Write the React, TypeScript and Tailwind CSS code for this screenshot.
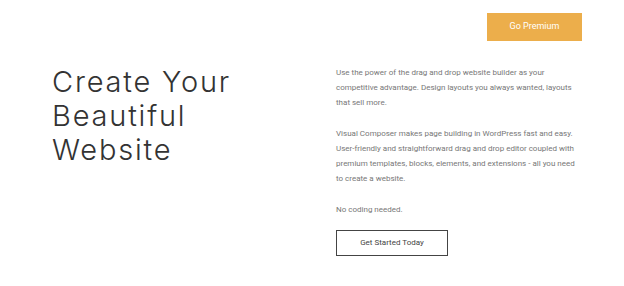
export default function App() {
  return (
    <div className="h-[286px] w-[624px] bg-white font-['Roboto',sans-serif]">
      <header className="flex justify-end pr-[42px] pt-[13px]">
        <button
          type="button"
          className="h-[28px] w-[95px] bg-[#ecae4b] text-[9px] text-white"
        >
          Go Premium
        </button>
      </header>

      <main className="mt-[24px] flex">
        <div className="w-[336px] pl-[52px]">
          <h1 className="font-['Inter',sans-serif] text-[29px] font-light leading-[34px] tracking-[1.8px] text-[#333]">
            Create Your
            <br />
            Beautiful
            <br />
            Website
          </h1>
        </div>

        <section className="w-[240px] text-[8px] leading-[15.2px] text-[#777]">
          <p>
            Use the power of the drag and drop website builder as your
            competitive advantage. Design layouts you always wanted, layouts
            that sell more.
          </p>
          <p className="mt-[15.2px]">
            Visual Composer makes page building in WordPress fast and easy.
            User-friendly and straightforward drag and drop editor coupled with
            premium templates, blocks, elements, and extensions - all you need
            to create a website.
          </p>
          <p className="mt-[15.2px]">No coding needed.</p>
          <button
            type="button"
            className="mt-[13px] h-[26px] w-[112px] border-[1.5px] border-[#444] text-[8px] text-[#444]"
          >
            Get Started Today
          </button>
        </section>
      </main>
    </div>
  );
}
